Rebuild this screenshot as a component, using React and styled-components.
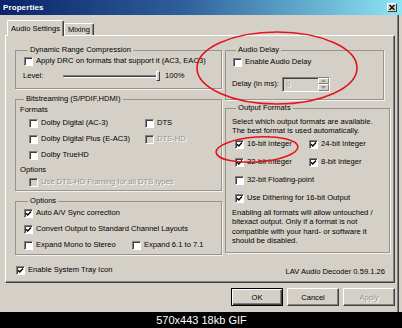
import React from "react";
import styled, { createGlobalStyle } from "styled-components";

const GlobalStyle = createGlobalStyle`
  html, body {
    margin: 0;
    padding: 0;
    background: #000;
  }
  body {
    width: 402px;
    height: 328px;
    overflow: hidden;
    font-family: "Liberation Sans", Arial, sans-serif;
    font-size: 7.6px;
    color: #000;
  }
`;

const Screen = styled.div`
  width: 402px;
  height: 328px;
  display: flex;
  flex-direction: column;
  background: #000;
`;

const Window = styled.div`
  position: relative;
  height: 312px;
  background: #d4d0c8;
  display: flex;
  flex-direction: column;
`;

const TitleBar = styled.div`
  height: 15px;
  flex: none;
  display: flex;
  align-items: center;
  justify-content: space-between;
  padding: 0 5px 0 3px;
  background: linear-gradient(90deg, #0a246a 0%, #2d5f9a 45%, #8ce6f6 100%);
`;

const Title = styled.span`
  color: #fff;
  font-weight: bold;
  font-size: 8px;
  letter-spacing: 0.1px;
`;

const CloseButton = styled.div`
  width: 10px;
  height: 9px;
  box-sizing: border-box;
  background: #d4d0c8;
  border: 1px solid;
  border-color: #fff #404040 #404040 #fff;
  display: flex;
  align-items: center;
  justify-content: center;
`;

const Body = styled.div`
  flex: 1;
  margin-right: 3px;
  padding: 5px 0 0 5px;
  border-right: 1px solid #404040;
  box-shadow: inset -1px 0 0 #808080;
  display: flex;
  flex-direction: column;
`;

const TabRow = styled.div`
  height: 15px;
  display: flex;
  align-items: flex-end;
  padding-left: 2px;
`;

const Tab = styled.div`
  position: relative;
  z-index: ${(p) => (p.$active ? 1 : 0)};
  height: ${(p) => (p.$active ? 16 : 12)}px;
  margin-bottom: ${(p) => (p.$active ? -1 : 0)}px;
  box-sizing: border-box;
  padding: 0 3px;
  display: flex;
  align-items: center;
  background: #d4d0c8;
  border-top: 1px solid #fff;
  border-left: 1px solid #fff;
  border-right: 1px solid #404040;
  box-shadow: inset -1px 0 0 #808080;
  border-radius: 2px 2px 0 0;
  white-space: nowrap;
`;

const Panel = styled.div`
  width: 390px;
  height: 248px;
  box-sizing: border-box;
  padding: 9px 4px 0 9px;
  border-top: 1px solid #fff;
  border-left: 1px solid #fff;
  border-right: 1px solid #404040;
  border-bottom: 1px solid #404040;
  box-shadow: inset -1px -1px 0 #808080;
  display: grid;
  grid-template-columns: 207px 165px;
  grid-template-rows: 210px auto;
  column-gap: 3px;
`;

const Column = styled.div`
  display: flex;
  flex-direction: column;
  gap: ${(p) => p.$gap}px;
`;

const Group = styled.fieldset`
  margin: 0;
  margin-right: ${(p) => p.$mr || 0}px;
  padding: 0 4px 0 ${(p) => p.$pl}px;
  height: ${(p) => p.$h}px;
  box-sizing: border-box;
  min-width: 0;
  border: 1px solid #98948d;
  box-shadow: 1px 1px 0 rgba(255, 255, 255, 0.7);
`;

const Legend = styled.legend`
  margin-left: ${(p) => p.$ml || 4}px;
  padding: 0 2px;
  line-height: 10px;
  height: 10px;
  font-size: 7.6px;
`;

const Row = styled.div`
  display: flex;
  align-items: center;
  height: ${(p) => p.$h || 12}px;
  margin-top: ${(p) => p.$mt || 0}px;
  margin-left: ${(p) => p.$ml || 0}px;
  white-space: nowrap;
`;

const CheckGrid = styled.div`
  display: grid;
  grid-template-columns: ${(p) => p.$col}px auto;
  grid-auto-rows: ${(p) => p.$row}px;
  margin-top: ${(p) => p.$mt || 0}px;
  margin-left: ${(p) => p.$ml || 0}px;
`;

const Cell = styled.div`
  display: flex;
  align-items: center;
  white-space: nowrap;
  grid-column: ${(p) => p.$span || "auto"};
`;

const Label = styled.span`
  line-height: 12px;
  color: ${(p) => (p.$disabled ? "#97948c" : "#000")};
  text-shadow: ${(p) => (p.$disabled ? "1px 1px 0 #fff" : "none")};
`;

const Box = styled.span`
  width: 9px;
  height: 9px;
  flex: none;
  box-sizing: border-box;
  margin-right: 3px;
  background: ${(p) => (p.$disabled ? "#d4d0c8" : "#fff")};
  border: 1px solid;
  border-color: #808080 #fff #fff #808080;
  box-shadow: inset 1px 1px 0 #404040;
  display: flex;
  align-items: center;
  justify-content: center;
`;

const Check = ({ checked, disabled, children }) => (
  <>
    <Box $disabled={disabled}>
      {checked && (
        <svg width="7" height="7" viewBox="0 0 7 7">
          <path d="M1 3.2 L2.8 5 L6 1.6" fill="none" stroke="#000" strokeWidth="1.4" />
        </svg>
      )}
    </Box>
    <Label $disabled={disabled}>{children}</Label>
  </>
);

const FieldLabel = styled.span`
  width: ${(p) => p.$w}px;
  flex: none;
  line-height: 12px;
`;

const Track = styled.div`
  width: 94px;
  height: 3px;
  box-sizing: border-box;
  border-top: 1px solid #808080;
  border-left: 1px solid #808080;
  border-bottom: 1px solid #fff;
  border-right: 1px solid #fff;
  background: #404040;
`;

const Thumb = styled.div`
  width: 4px;
  height: 10px;
  box-sizing: border-box;
  margin-left: -1px;
  margin-right: 5px;
  background: #d4d0c8;
  border-top: 1px solid #fff;
  border-left: 1px solid #fff;
  border-right: 1px solid #404040;
  border-bottom: 1px solid #404040;
`;

const SpinBox = styled.div`
  width: 48px;
  height: 15px;
  box-sizing: border-box;
  display: flex;
  background: #d4d0c8;
  border: 1px solid;
  border-color: #808080 #fff #fff #808080;
  box-shadow: inset 1px 1px 0 #404040;
`;

const SpinValue = styled.span`
  flex: 1;
  padding-left: 3px;
  line-height: 13px;
  color: #97948c;
  text-shadow: 1px 1px 0 #fff;
`;

const SpinButtons = styled.div`
  width: 11px;
  display: flex;
  flex-direction: column;
`;

const SpinHalf = styled.div`
  flex: 1;
  background: #d4d0c8;
  border-top: 1px solid #fff;
  border-left: 1px solid #fff;
  border-right: 1px solid #808080;
  border-bottom: 1px solid #808080;
  display: flex;
  align-items: center;
  justify-content: center;
`;

const Text = styled.div`
  line-height: ${(p) => p.$lh}px;
  margin-top: ${(p) => p.$mt || 0}px;
  white-space: nowrap;
`;

const Footer = styled.div`
  grid-column: 1 / 3;
  margin-top: 8px;
  height: 14px;
  display: flex;
  justify-content: space-between;
  align-items: flex-end;
  padding-right: 5px;
`;

const Tray = styled.div`
  display: flex;
  align-items: center;
  height: 12px;
  margin-left: 1px;
  margin-bottom: 1px;
`;

const Version = styled.span`
  line-height: 10px;
`;

const ButtonRow = styled.div`
  width: 390px;
  margin-top: 5px;
  display: flex;
  justify-content: flex-end;
  gap: 4px;
`;

const Button = styled.div`
  width: 52px;
  height: 18px;
  box-sizing: border-box;
  display: flex;
  align-items: center;
  justify-content: center;
  background: #d4d0c8;
  border: 1px solid;
  border-color: ${(p) => (p.$default ? "#000" : "#fff #404040 #404040 #fff")};
  box-shadow: ${(p) =>
    p.$default
      ? "inset 1px 1px 0 #fff, inset -1px -1px 0 #404040, inset -2px -2px 0 #808080"
      : "inset -1px -1px 0 #808080"};
  color: ${(p) => (p.$disabled ? "#97948c" : "#000")};
  text-shadow: ${(p) => (p.$disabled ? "1px 1px 0 #fff" : "none")};
`;

const Marks = styled.svg`
  position: absolute;
  left: 0;
  top: 0;
  pointer-events: none;
`;

const Caption = styled.div`
  height: 16px;
  color: #fff;
  font-size: 11px;
  line-height: 16px;
  text-align: center;
  padding-left: 1px;
`;

const Arrow = ({ up }) => (
  <svg width="5" height="3" viewBox="0 0 5 3">
    <path d={up ? "M0 3 L2.5 0 L5 3 Z" : "M0 0 L2.5 3 L5 0 Z"} fill="#97948c" />
  </svg>
);

export default function App() {
  return (
    <Screen>
      <GlobalStyle />
      <Window>
        <TitleBar>
          <Title>Properties</Title>
          <CloseButton>
            <svg width="6" height="5" viewBox="0 0 6 5">
              <path d="M0.5 0 L5.5 5 M5.5 0 L0.5 5" stroke="#000" strokeWidth="1.3" />
            </svg>
          </CloseButton>
        </TitleBar>
        <Body>
          <TabRow>
            <Tab $active>Audio Settings</Tab>
            <Tab>Mixing</Tab>
          </TabRow>
          <Panel>
            <Column $gap={5}>
              <Group $h={44} $pl={8}>
                <Legend>Dynamic Range Compression</Legend>
                <Row>
                  <Check>Apply DRC on formats that support it (AC3, EAC3)</Check>
                </Row>
                <Row $mt={3} $ml={-1}>
                  <FieldLabel $w={40}>Level:</FieldLabel>
                  <Track />
                  <Thumb />
                  <Label>100%</Label>
                </Row>
              </Group>
              <Group $h={97} $pl={4}>
                <Legend $ml={0}>Bitstreaming (S/PDIF,HDMI)</Legend>
                <Row $h={11}>Formats</Row>
                <CheckGrid $col={116} $row={16} $ml={9}>
                  <Cell><Check>Dolby Digital (AC-3)</Check></Cell>
                  <Cell><Check>DTS</Check></Cell>
                  <Cell><Check>Dolby Digital Plus (E-AC3)</Check></Cell>
                  <Cell><Check disabled>DTS-HD</Check></Cell>
                  <Cell $span="1 / 3"><Check>Dolby TrueHD</Check></Cell>
                </CheckGrid>
                <Row>Options</Row>
                <Row $mt={1} $ml={9}>
                  <Check disabled>Use DTS-HD Framing for all DTS types</Check>
                </Row>
              </Group>
              <Group $h={59} $pl={8}>
                <Legend $ml={0}>Options</Legend>
                <CheckGrid $col={108} $row={16} $mt={-1}>
                  <Cell $span="1 / 3"><Check checked>Auto A/V Sync correction</Check></Cell>
                  <Cell $span="1 / 3"><Check checked>Convert Output to Standard Channel Layouts</Check></Cell>
                  <Cell><Check>Expand Mono to Stereo</Check></Cell>
                  <Cell><Check>Expand 6.1 to 7.1</Check></Cell>
                </CheckGrid>
              </Group>
            </Column>
            <Column $gap={3}>
              <Group $h={55} $pl={6} $mr={6}>
                <Legend $ml={0}>Audio Delay</Legend>
                <Row $mt={1} $ml={1}>
                  <Check>Enable Audio Delay</Check>
                </Row>
                <Row $h={16} $mt={8}>
                  <FieldLabel $w={50}>Delay (in ms):</FieldLabel>
                  <SpinBox>
                    <SpinValue>0</SpinValue>
                    <SpinButtons>
                      <SpinHalf><Arrow up /></SpinHalf>
                      <SpinHalf><Arrow /></SpinHalf>
                    </SpinButtons>
                  </SpinBox>
                </Row>
              </Group>
              <Group $h={150} $pl={6}>
                <Legend $ml={0}>Output Formats</Legend>
                <Text $lh={9} $mt={4}>
                  Select which output formats are available.
                  <br />
                  The best format is used automatically.
                </Text>
                <CheckGrid $col={74} $row={18} $ml={3}>
                  <Cell><Check checked>16-bit Integer</Check></Cell>
                  <Cell><Check checked>24-bit Integer</Check></Cell>
                  <Cell><Check checked>32-bit Integer</Check></Cell>
                  <Cell><Check checked>8-bit Integer</Check></Cell>
                  <Cell $span="1 / 3"><Check>32-bit Floating-point</Check></Cell>
                  <Cell $span="1 / 3"><Check checked>Use Dithering for 16-bit Output</Check></Cell>
                </CheckGrid>
                <Text $lh={9.3} $mt={1}>
                  Enabling all formats will allow untouched /
                  <br />
                  bitexact output. Only if a format is not
                  <br />
                  compatible with your hard- or software it
                  <br />
                  should be disabled.
                </Text>
              </Group>
            </Column>
            <Footer>
              <Tray>
                <Check checked>Enable System Tray Icon</Check>
              </Tray>
              <Version>LAV Audio Decoder 0.59.1.26</Version>
            </Footer>
          </Panel>
          <ButtonRow>
            <Button $default>OK</Button>
            <Button>Cancel</Button>
            <Button $disabled>Apply</Button>
          </ButtonRow>
        </Body>
        <Marks width="402" height="312" viewBox="0 0 402 312">
          <ellipse cx="277" cy="68" rx="80" ry="36" fill="none" stroke="#e4141c" strokeWidth="1.6" />
          <ellipse
            cx="257"
            cy="149.5"
            rx="41"
            ry="12.5"
            fill="none"
            stroke="#e4141c"
            strokeWidth="1.6"
            transform="rotate(-4 257 149.5)"
          />
        </Marks>
      </Window>
      <Caption>570x443 18kb GIF</Caption>
    </Screen>
  );
}
